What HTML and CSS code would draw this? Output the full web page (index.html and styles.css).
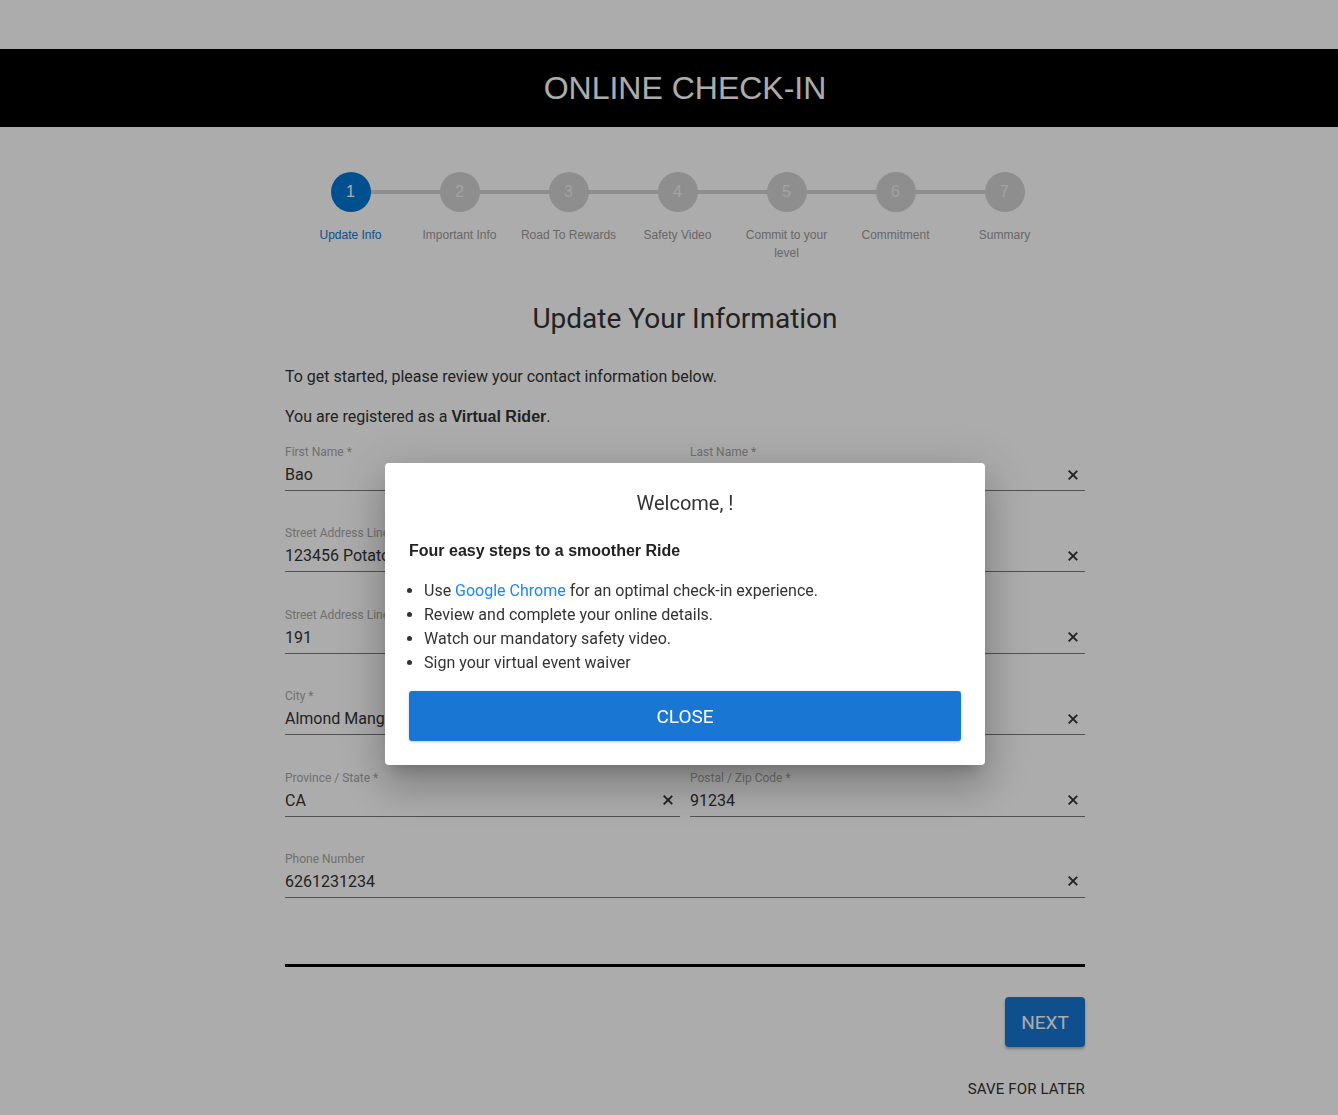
FILE: index.html
```html
<!DOCTYPE html>
<html>
<head>
<meta charset="utf-8">
<link rel="stylesheet" href="styles.css">
</head>
<body>
<div class="topgap"></div>
<header class="header"><h1 class="header-title">ONLINE CHECK-IN</h1></header>
<main class="page">
  <div class="content">
    <ol class="stepper">
      <li class="step active"><span class="dot">1</span><span class="step-label">Update Info</span></li>
      <li class="step"><span class="dot">2</span><span class="step-label">Important Info</span></li>
      <li class="step"><span class="dot">3</span><span class="step-label">Road To Rewards</span></li>
      <li class="step"><span class="dot">4</span><span class="step-label">Safety Video</span></li>
      <li class="step"><span class="dot">5</span><span class="step-label">Commit to your level</span></li>
      <li class="step"><span class="dot">6</span><span class="step-label">Commitment</span></li>
      <li class="step last"><span class="dot">7</span><span class="step-label">Summary</span></li>
    </ol>
    <h2 class="title">Update Your Information</h2>
    <p class="intro">To get started, please review your contact information below.</p>
    <p class="intro second">You are registered as a <b class="strong">Virtual Rider</b>.</p>
    <div class="form">
      <div class="field"><label>First Name *</label><div class="input"><span>Bao</span><i class="clr"></i></div></div>
      <div class="field"><label>Last Name *</label><div class="input"><span>Nguyen</span><i class="clr"></i></div></div>
      <div class="field wide"><label>Street Address Line 1 *</label><div class="input"><span>123456 Potato Street</span><i class="clr"></i></div></div>
      <div class="field wide"><label>Street Address Line 2</label><div class="input"><span>191</span><i class="clr"></i></div></div>
      <div class="field wide"><label>City *</label><div class="input"><span>Almond Mango</span><i class="clr"></i></div></div>
      <div class="field"><label>Province / State *</label><div class="input"><span>CA</span><i class="clr"></i></div></div>
      <div class="field"><label>Postal / Zip Code *</label><div class="input"><span>91234</span><i class="clr"></i></div></div>
      <div class="field wide"><label>Phone Number</label><div class="input"><span>6261231234</span><i class="clr"></i></div></div>
    </div>
    <div class="divider"></div>
    <div class="actions">
      <button class="next">NEXT</button>
      <a class="later">SAVE FOR LATER</a>
    </div>
  </div>
</main>
<div class="backdrop"></div>
<div class="modal">
  <h3 class="modal-title">Welcome, !</h3>
  <p class="modal-sub">Four easy steps to a smoother Ride</p>
  <ul class="modal-list">
    <li>Use <a class="link">Google Chrome</a> for an optimal check-in experience.</li>
    <li>Review and complete your online details.</li>
    <li>Watch our mandatory safety video.</li>
    <li>Sign your virtual event waiver</li>
  </ul>
  <button class="close">CLOSE</button>
</div>
</body>
</html>
```
FILE: styles.css
```css
* { box-sizing: border-box; }
html, body { margin: 0; padding: 0; }
body {
  background: #fff;
  font-family: Roboto, "Liberation Sans", Arial, sans-serif;
  color: #333;
}
.topgap { height: 49px; }
.header {
  background: #000;
  height: 78px;
  display: flex;
  align-items: center;
  justify-content: center;
  padding-left: 32px;
}
.header-title {
  margin: 0;
  font-family: "Liberation Sans", Arial, sans-serif;
  font-weight: 400;
  font-size: 32px;
  color: #fff;
}
.page {
  display: flex;
  justify-content: center;
  padding-left: 32px;
}
.content { width: 800px; padding-top: 45px; }

.stepper {
  list-style: none;
  margin: 0 0 0 11px;
  padding: 0;
  display: flex;
  font-family: "Liberation Sans", Arial, sans-serif;
}
.step {
  width: 109px;
  display: flex;
  flex-direction: column;
  align-items: center;
  position: relative;
}
.step::after {
  content: "";
  position: absolute;
  top: 18px;
  left: 54.5px;
  width: 109px;
  height: 4px;
  background: #d3d3d3;
  z-index: 0;
}
.step.last::after { display: none; }
.dot {
  position: relative;
  z-index: 1;
  width: 40px;
  height: 40px;
  border-radius: 50%;
  background: #d3d3d3;
  color: #f0f0f0;
  font-size: 16px;
  display: flex;
  align-items: center;
  justify-content: center;
}
.step.active .dot { background: #0077d6; color: #fff; }
.step-label {
  margin-top: 14px;
  font-size: 12px;
  line-height: 18px;
  color: #9a9a9a;
  text-align: center;
  width: 96px;
}
.step.active .step-label { color: #1276cf; }

.title {
  margin: 39px 0 0;
  text-align: center;
  font-weight: 400;
  font-size: 28px;
  line-height: 36px;
  color: #333;
}
.intro {
  margin: 28px 0 0;
  font-size: 16px;
  line-height: 24px;
  color: #333;
}
.intro.second { margin-top: 16px; }
.strong {
  font-family: "Liberation Sans", Arial, sans-serif;
  font-weight: 700;
}

.form {
  margin-top: 15px;
  display: grid;
  grid-template-columns: 1fr 1fr;
  column-gap: 10px;
}
.field { margin-bottom: 34.4px; }
.field.wide { grid-column: 1 / 3; }
.field label {
  display: block;
  font-size: 12px;
  line-height: 16px;
  color: #a6a6a6;
}
.input {
  height: 31px;
  border-bottom: 1px solid #7a7a7a;
  display: flex;
  align-items: center;
  justify-content: space-between;
  font-size: 16px;
  color: #333;
  padding-bottom: 1px;
}
.clr {
  width: 10px;
  height: 10px;
  margin-right: 7px;
  position: relative;
}
.clr::before, .clr::after {
  content: "";
  position: absolute;
  left: 4px;
  top: -1px;
  width: 1.6px;
  height: 12px;
  background: #333;
  transform: rotate(45deg);
}
.clr::after { transform: rotate(-45deg); }

.divider {
  margin-top: 32px;
  height: 3px;
  background: #000;
}
.actions {
  display: flex;
  flex-direction: column;
  align-items: flex-end;
}
.next {
  margin-top: 30px;
  width: 80px;
  height: 50px;
  border: none;
  border-radius: 4px;
  background: #1976d2;
  color: #fff;
  font-family: Roboto, "Liberation Sans", Arial, sans-serif;
  font-size: 19px;
  box-shadow: 0 2px 3px rgba(0,0,0,0.3);
}
.later {
  margin-top: 33px;
  font-size: 15px;
  line-height: 18px;
  letter-spacing: 0.15px;
  color: #333;
  margin-bottom: 20px;
}

.backdrop {
  position: fixed;
  inset: 0;
  z-index: 10;
  background: rgba(0,0,0,0.325);
}
.modal {
  position: absolute;
  z-index: 11;
  top: 463px;
  left: 385px;
  width: 600px;
  height: 302px;
  background: #fff;
  border-radius: 4px;
  box-shadow: 0 11px 15px -7px rgba(0,0,0,0.2), 0 24px 38px 3px rgba(0,0,0,0.14), 0 9px 46px 8px rgba(0,0,0,0.12);
  padding: 26px 24px 24px;
}
.modal-title {
  margin: 0;
  text-align: center;
  font-weight: 400;
  font-size: 20px;
  line-height: 28px;
  color: #333;
}
.modal-sub {
  margin: 22px 0 0;
  font-family: "Liberation Sans", Arial, sans-serif;
  font-weight: 700;
  font-size: 16px;
  line-height: 24px;
  color: #222;
}
.modal-list {
  margin: 16px 0 0;
  padding-left: 15px;
  font-size: 16px;
  line-height: 24px;
  color: #333;
}
.link { color: #1a86f0; }
.close {
  margin-top: 16px;
  width: 100%;
  height: 50px;
  border: none;
  border-radius: 3px;
  background: #1976d2;
  color: #fff;
  font-family: Roboto, "Liberation Sans", Arial, sans-serif;
  font-size: 19px;
  box-shadow: 0 1px 3px rgba(0,0,0,0.2);
}
```
